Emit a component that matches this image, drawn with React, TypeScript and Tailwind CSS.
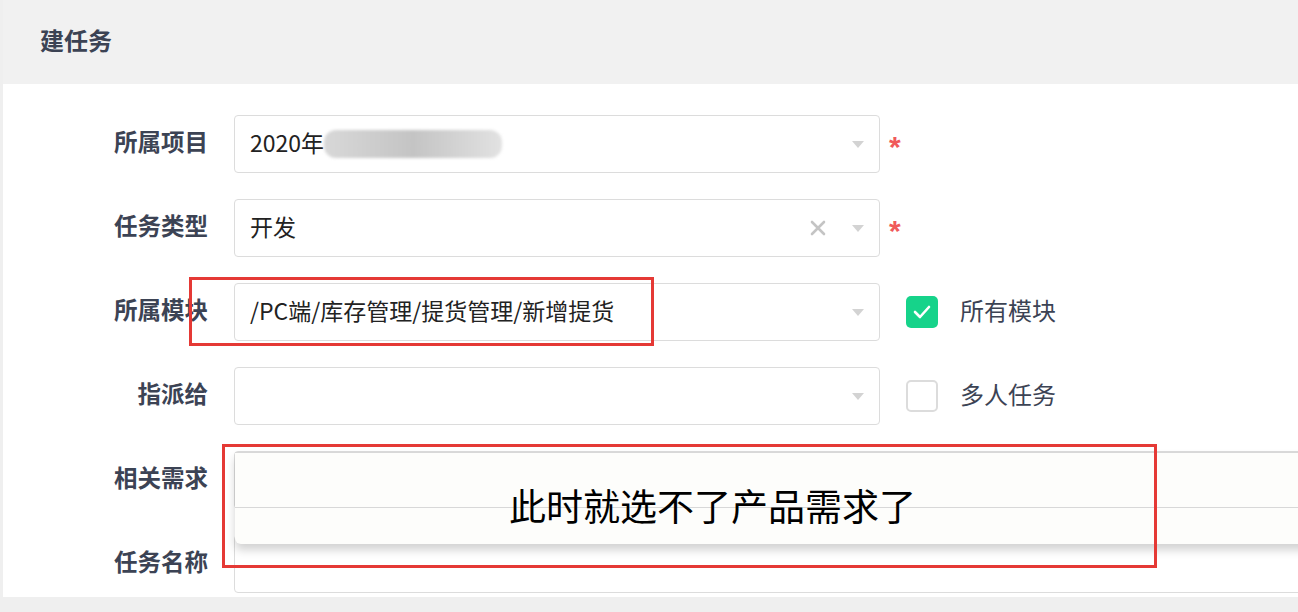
import React from "react";

const font = { fontFamily: '"Microsoft YaHei", "Noto Sans CJK SC", "Liberation Sans", sans-serif' };

function Arrow() {
  return (
    <svg width="12" height="7" viewBox="0 0 12 7" className="shrink-0">
      <path d="M0 0 L12 0 L6 7 Z" fill="#d3d3d3" />
    </svg>
  );
}

function Clear() {
  return (
    <svg width="16" height="16" viewBox="0 0 16 16" className="shrink-0">
      <path d="M2 2 L14 14 M14 2 L2 14" stroke="#c4c4c4" strokeWidth="2.6" strokeLinecap="round" />
    </svg>
  );
}

function Label({ text }: { text: string }) {
  return (
    <div className="relative top-[-2px] w-[205px] shrink-0 text-right text-[23.5px] font-bold text-[#3c4354] leading-none">
      {text}
    </div>
  );
}

function Star() {
  return (
    <span
      className="relative top-[3px] ml-[9px] text-[30px] font-bold leading-none text-[#f05a5a]"
      style={{ fontFamily: '"Liberation Sans", Arial, sans-serif' }}
    >
      *
    </span>
  );
}

export default function App() {
  return (
    <div className="relative h-[612px] w-[1298px] overflow-hidden bg-[#efefef] pl-[3px]" style={font}>
      <div className="flex h-[84px] items-center bg-[#f1f1f1] pl-[37px]">
        <span className="relative top-[-2px] text-[24px] font-bold text-[#3c4354]">建任务</span>
      </div>
      <div className="flex flex-col gap-[26px] bg-white pt-[31px] pb-[4px]">
        {/* row 1 */}
        <div className="flex items-center">
          <Label text="所属项目" />
          <div className="ml-[26px] flex h-[58px] w-[646px] items-center rounded-[4px] border border-[#dcdcdc] pl-[15px] pr-[15px]">
            <span className="relative top-[-2px] text-[23px] text-[#222]">2020年</span>
            <div className="h-[28px] w-[178px] rounded-[12px] bg-gradient-to-r from-[#d8d8d8] via-[#c4c4c4] to-[#e2e2e2] blur-[1.5px]" />
            <div className="flex-1" />
            <Arrow />
          </div>
          <Star />
        </div>
        {/* row 2 */}
        <div className="flex items-center">
          <Label text="任务类型" />
          <div className="ml-[26px] flex h-[58px] w-[646px] items-center rounded-[4px] border border-[#dcdcdc] pl-[15px] pr-[15px]">
            <span className="relative top-[-2px] text-[23px] text-[#222]">开发</span>
            <div className="flex-1" />
            <Clear />
            <div className="w-[26px]" />
            <Arrow />
          </div>
          <Star />
        </div>
        {/* row 3 */}
        <div className="flex items-center">
          <Label text="所属模块" />
          <div className="ml-[26px] flex h-[58px] w-[646px] items-center rounded-[4px] border border-[#dcdcdc] pl-[15px] pr-[15px]">
            <span className="relative top-[-2px] text-[23px] text-[#222]">/PC端/库存管理/提货管理/新增提货</span>
            <div className="flex-1" />
            <Arrow />
          </div>
          <div className="ml-[26px] flex h-[32px] w-[32px] items-center justify-center rounded-[5px] bg-[#16d38a]">
            <svg width="20" height="16" viewBox="0 0 20 16">
              <path d="M3 8 L8 13 L17 3" stroke="white" strokeWidth="2.6" fill="none" strokeLinecap="round" strokeLinejoin="round" />
            </svg>
          </div>
          <span className="relative top-[-2px] ml-[22px] text-[24px] text-[#3c4354]">所有模块</span>
        </div>
        {/* row 4 */}
        <div className="flex items-center">
          <Label text="指派给" />
          <div className="ml-[26px] flex h-[58px] w-[646px] items-center rounded-[4px] border border-[#dcdcdc] pl-[15px] pr-[15px]">
            <div className="flex-1" />
            <Arrow />
          </div>
          <div className="ml-[26px] h-[32px] w-[32px] rounded-[5px] border-2 border-[#dcdcdc] bg-white" />
          <span className="relative top-[-2px] ml-[22px] text-[24px] text-[#3c4354]">多人任务</span>
        </div>
        {/* row 5 */}
        <div className="flex items-center">
          <Label text="相关需求" />
          <div className="relative ml-[26px] h-[58px] w-[1100px] shrink-0 rounded-[4px] border border-[#dcdcdc]">
            <div className="absolute left-0 top-0 z-10 flex h-[92px] w-[1100px] flex-col rounded-b-[6px] border-t border-[#d8d8d8] bg-[#fdfdfb] shadow-[0_6px_10px_rgba(0,0,0,0.18)]">
              <div className="h-[55px] border-b border-[#d8d8d8]" />
            </div>
          </div>
        </div>
        {/* row 6 */}
        <div className="flex items-center">
          <Label text="任务名称" />
          <div className="ml-[26px] h-[58px] w-[1100px] shrink-0 rounded-[4px] border border-[#dcdcdc]" />
        </div>
      </div>

      {/* annotations */}
      <div className="absolute left-[189px] top-[277px] h-[69px] w-[465px] border-[3px] border-[#e53935]" />
      <div className="absolute left-[222px] top-[444px] z-20 h-[124px] w-[935px] border-[3px] border-[#e53935]" />
      <div className="absolute left-[509px] top-[487px] z-20 text-[37px] leading-none text-black">
        此时就选不了产品需求了
      </div>
    </div>
  );
}
